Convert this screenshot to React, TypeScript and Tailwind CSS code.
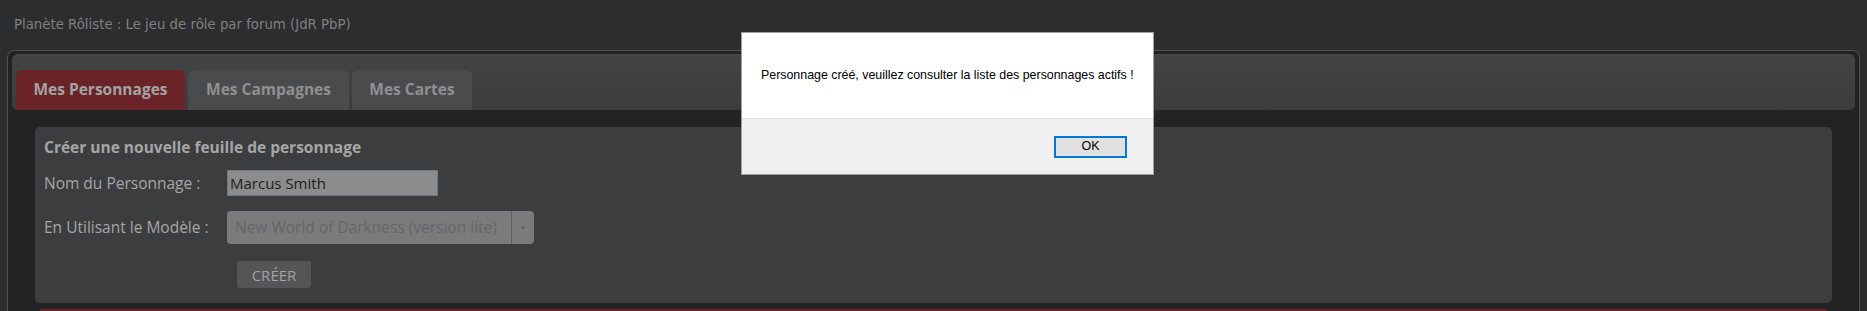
import { ChevronDown } from 'lucide-react';

// Character sheet creation page, with the browser confirm dialog shown over it
export default function App() {
  return (
    <div className="relative h-[311px] w-full overflow-hidden bg-[#2c2d2e]" style={{ fontFamily: '"Open Sans", sans-serif' }}>
      {/* Site header */}
      <div className="h-[50px] pl-[14px] pt-[15px] text-[13.3px] text-[#7f8081]" style={{ fontFamily: '"DejaVu Sans", sans-serif' }}>
        Planète Rôliste : Le jeu de rôle par forum (JdR PbP)
      </div>

      {/* Main panel */}
      <div className="mx-[7px] h-[270px] rounded-t-[7px] border border-b-0 border-[#4e4f50] bg-[#222324] px-[4px] pt-[3px]">
        {/* Tabs bar */}
        <div className="flex h-[56px] items-end gap-[3px] rounded-[6px] bg-gradient-to-b from-[#434445] to-[#3b3c3d] px-[4px]">
          <div className="flex h-[40px] w-[169px] items-center justify-center rounded-t-[6px] bg-[#6a2326] text-[15.5px] font-bold text-[#a3a3a6]">
            Mes Personnages
          </div>
          <div className="flex h-[40px] w-[161px] items-center justify-center rounded-t-[6px] bg-[#4a4b4c] text-[15.5px] font-bold text-[#8f9092]">
            Mes Campagnes
          </div>
          <div className="flex h-[40px] w-[120px] items-center justify-center rounded-t-[6px] bg-[#4a4b4c] text-[15.5px] font-bold text-[#8f9092]">
            Mes Cartes
          </div>
        </div>

        {/* Creation form */}
        <div className="mx-[23px] mt-[17px] h-[176px] rounded-[5px] bg-[#3c3d3e] pl-[9px] pt-[9px] text-[#a5a6a7]">
          <div className="text-[15.5px] font-bold">Créer une nouvelle feuille de personnage</div>

          <div className="mt-[11px] flex items-center">
            <div className="w-[183px] text-[15.5px]">Nom du Personnage :</div>
            <div className="flex h-[26px] w-[211px] items-center border border-[#6b7987] bg-[#8c8c8c] px-[2px] text-[15px] text-[#1e1e1e]">
              Marcus Smith
            </div>
          </div>

          <div className="mt-[15px] flex items-center">
            <div className="w-[183px] text-[15.5px]">En Utilisant le Modèle :</div>
            <div className="flex h-[33px] w-[307px] items-center rounded-[4px] bg-[#7b7b7c]">
              <div className="flex-1 pl-[8px] text-[15.5px] text-[#656667]">New World of Darkness (version lite)</div>
              <div className="flex h-full w-[23px] items-center justify-center border-l border-[#5f6061]">
                <ChevronDown size={10} strokeWidth={0} className="fill-[#5a5b5c]" />
              </div>
            </div>
          </div>

          <div className="mt-[17px] pl-[193px]">
            <div className="flex h-[27px] w-[74px] items-center justify-center rounded-[3px] bg-[#545556] text-[15px] text-[#a0a1a2]">
              CRÉER
            </div>
          </div>
        </div>

        <div className="mx-[28px] mt-[6px] h-[3px] bg-[#6a2326]" />
      </div>

      {/* Alert dialog */}
      <div
        className="absolute left-[741px] top-[32px] w-[413px] border border-[#a0a0a0] bg-white text-black"
        style={{ fontFamily: '"Liberation Sans", Arial, sans-serif' }}
      >
        <div className="flex h-[85px] items-center pl-[19px] text-[12.4px]">
          Personnage créé, veuillez consulter la liste des personnages actifs !
        </div>
        <div className="flex h-[56px] items-center justify-end border-t border-[#dfdfdf] bg-[#f0f0f0] pr-[26px]">
          <div className="flex h-[22px] w-[73px] items-center justify-center border-2 border-[#0078d7] bg-[#e1e1e1] text-[12.5px]">
            OK
          </div>
        </div>
      </div>
    </div>
  );
}
